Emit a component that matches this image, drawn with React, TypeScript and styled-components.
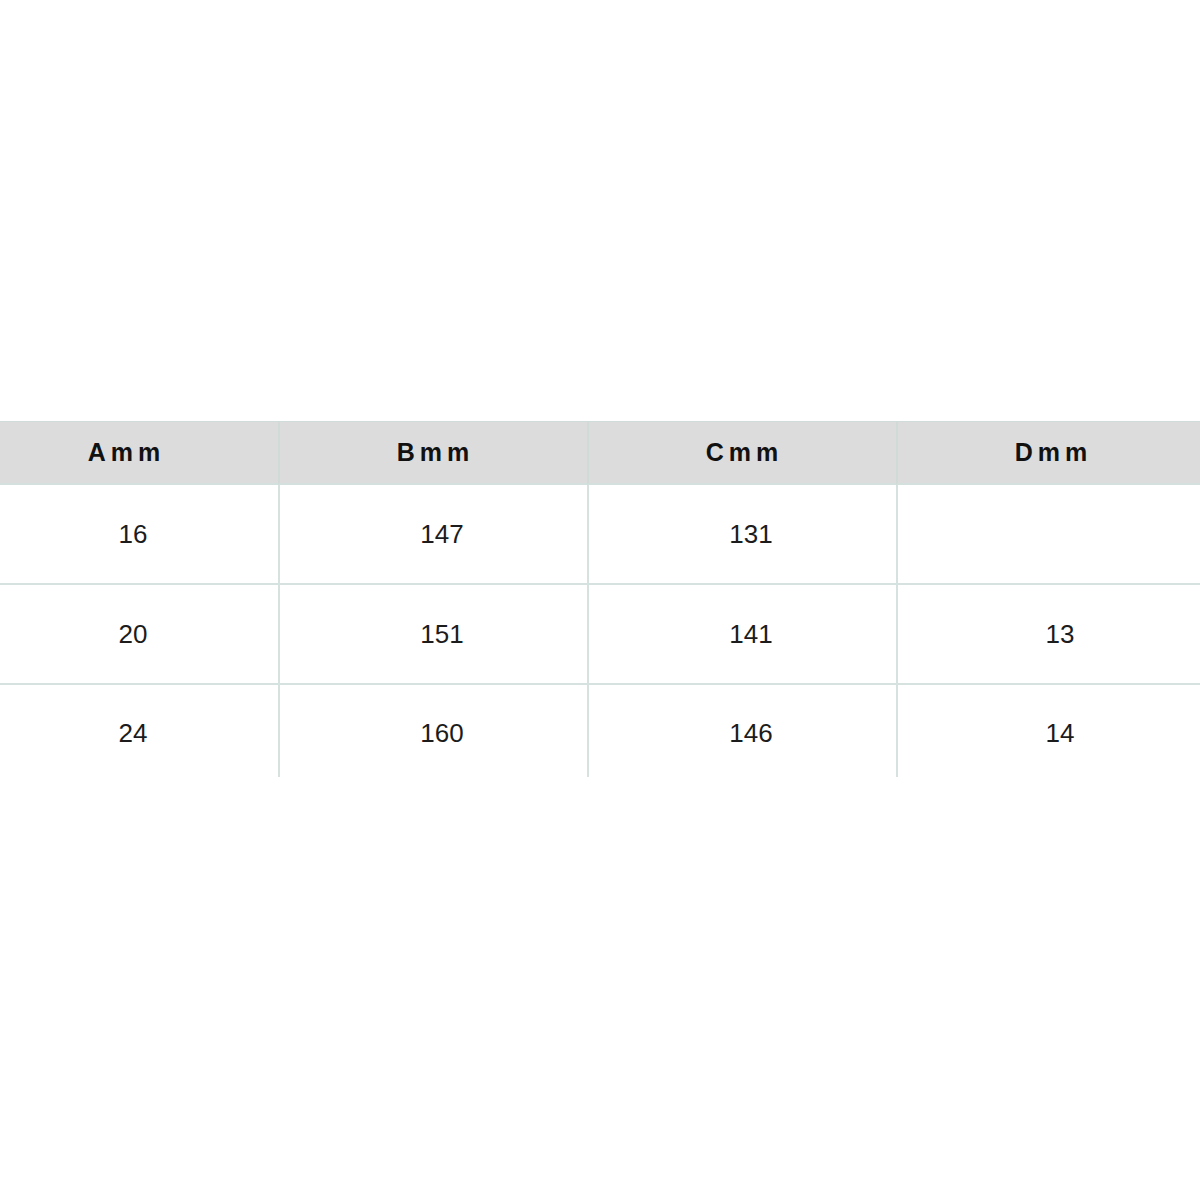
import styled, { createGlobalStyle } from "styled-components";

const rows = [
  ["16", "147", "131", ""],
  ["20", "151", "141", "13"],
  ["24", "160", "146", "14"],
];

const heads = ["Amm", "Bmm", "Cmm", "Dmm"];

const App = () => {
  return (
    <>
      <GlobalStyle />
      <Page>
        <Table>
          {heads.map((h) => (
            <HeadCell key={h}>{h}</HeadCell>
          ))}
          {rows.map((row, i) =>
            row.map((v, j) => (
              <BodyCell key={`${i}-${j}`} $last={i === rows.length - 1}>
                {v}
              </BodyCell>
            ))
          )}
        </Table>
      </Page>
    </>
  );
};

export default App;

const GlobalStyle = createGlobalStyle`
  html, body {
    margin: 0;
    padding: 0;
    background: #ffffff;
    overflow: hidden;
  }
`;

const Page = styled.div`
  width: 1200px;
  height: 1200px;
  padding-top: 421px;
  box-sizing: border-box;
  overflow: hidden;
  font-family: "Liberation Sans", Arial, sans-serif;
`;

const Table = styled.div`
  display: grid;
  grid-template-columns: repeat(4, 309px);
  margin-left: -31px;
  width: 1236px;
`;

const HeadCell = styled.div`
  height: 64px;
  display: flex;
  align-items: center;
  justify-content: center;
  background: #dcdcdc;
  border-top: 1px solid #cfdcd9;
  border-bottom: 2px solid #d3e0dd;
  border-left: 2px solid #d0dbd8;
  color: #111111;
  font-size: 25px;
  font-weight: 700;
  letter-spacing: 5px;
  padding-left: 4px;
  box-sizing: border-box;
`;

const BodyCell = styled.div<{ $last?: boolean }>`
  height: ${(p) => (p.$last ? "92px" : "100px")};
  display: flex;
  align-items: center;
  justify-content: center;
  padding-left: 17px;
  padding-top: ${(p) => (p.$last ? "4px" : "0")};
  box-sizing: border-box;
  border-left: 2px solid #d6e2df;
  border-bottom: ${(p) => (p.$last ? "none" : "2px solid #d6e2df")};
  color: #1c1c1c;
  font-size: 26px;
`;
